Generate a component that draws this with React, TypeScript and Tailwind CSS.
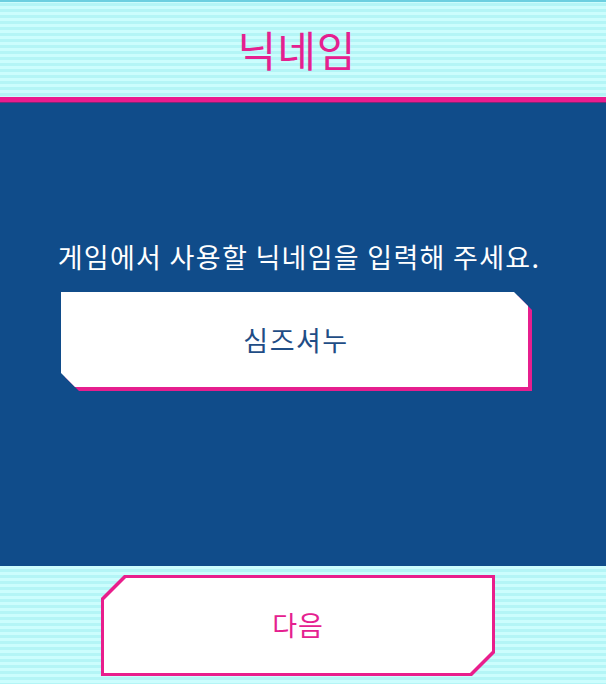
import React from "react";

const stripes =
  "bg-[repeating-linear-gradient(180deg,#ccfdfd_0px,#ccfdfd_3px,#b4f5f6_3px,#b4f5f6_6px)]";

export default function App() {
  return (
    <div
      className="flex h-[684px] w-[606px] flex-col overflow-hidden"
      style={{ fontFamily: '"Noto Sans CJK KR", "Noto Sans", sans-serif' }}
    >
      {/* header */}
      <div className={`flex h-[97px] flex-col ${stripes}`}>
        <div className="h-[2px] bg-[#6ccfe0]" />
        <div className="flex flex-1 items-center justify-center pr-[12px] pb-[2px]">
          <span className="text-[42px] leading-none tracking-[1px] text-[#e5208f]">닉네임</span>
        </div>
      </div>
      <div className="h-[5px] bg-[#ea1c8e]" />
      <div className="h-[1px] bg-[#7a2a78]" />

      {/* main panel */}
      <div className="flex flex-1 flex-col bg-[#104c8a] pt-[136px]">
        <p className="pr-[8px] text-center text-[27px] leading-[36px] tracking-[1.3px] text-white">
          게임에서 사용할 닉네임을 입력해 주세요.
        </p>
        <div className="relative ml-[61px] mt-[17px] h-[99px] w-[471px]">
          <div className="absolute left-[4px] top-[4px] h-[95px] w-[467px] bg-[#e61f8e] [clip-path:polygon(0_0,calc(100%_-_14px)_0,100%_14px,100%_100%,14px_100%,0_calc(100%_-_14px))]" />
          <div className="absolute left-0 top-0 flex h-[95px] w-[467px] items-center justify-center bg-white [clip-path:polygon(0_0,calc(100%_-_14px)_0,100%_14px,100%_100%,14px_100%,0_calc(100%_-_14px))]">
            <span className="pl-[3px] text-[27px] leading-none tracking-[1.5px] text-[#1f4d86]">심즈셔누</span>
          </div>
        </div>
      </div>

      {/* footer */}
      <div className={`flex h-[118px] flex-col pt-[9px] ${stripes}`}>
        <div className="ml-[101px] h-[101px] w-[394px] bg-[#e91e8c] p-[3px] [clip-path:polygon(23px_0,100%_0,100%_calc(100%_-_23px),calc(100%_-_23px)_100%,0_100%,0_23px)]">
          <button className="flex h-full w-full items-center justify-center bg-white [clip-path:polygon(22px_0,100%_0,100%_calc(100%_-_22px),calc(100%_-_22px)_100%,0_100%,0_22px)]">
            <span className="pb-[2px] text-[27px] leading-none tracking-[1px] text-[#e5208f]">다음</span>
          </button>
        </div>
      </div>
    </div>
  );
}
